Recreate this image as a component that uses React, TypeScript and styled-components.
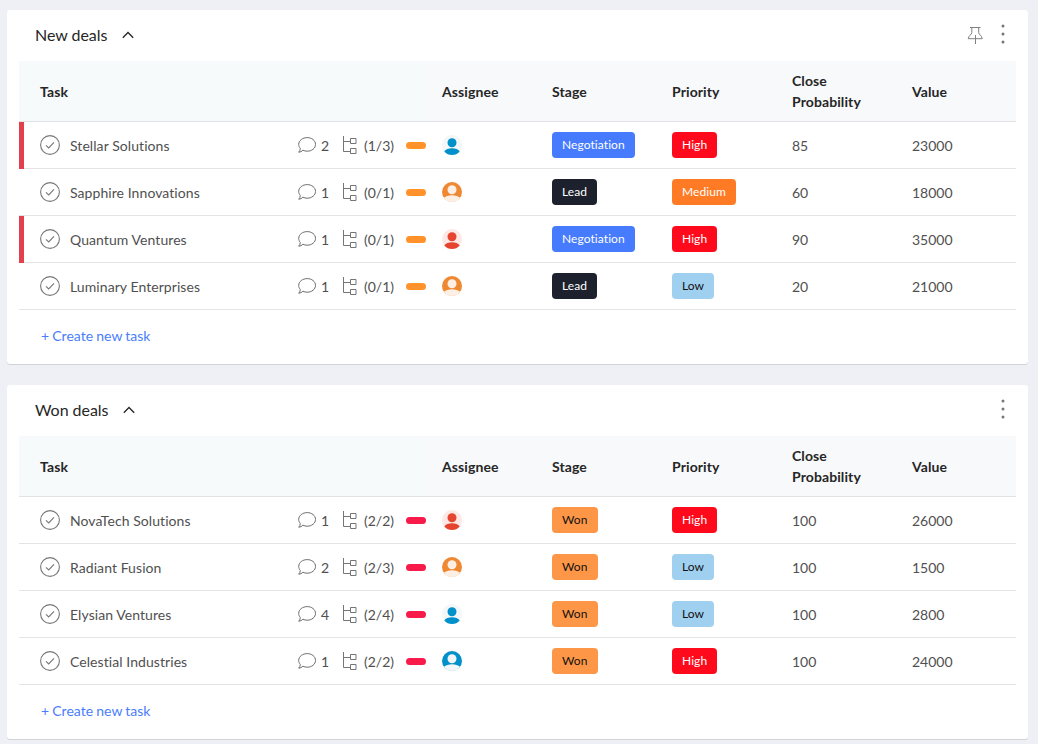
import React from "react";
import styled, { createGlobalStyle } from "styled-components";

const GlobalStyle = createGlobalStyle`
  * { box-sizing: border-box; }
  body {
    margin: 0;
    background: #eff0f5;
    font-family: Lato, "Liberation Sans", sans-serif;
    font-size: 14px;
    font-variant-ligatures: none;
    color: #505050;
  }
`;

const Page = styled.main`
  display: flex;
  flex-direction: column;
  gap: 21px;
  padding: 10px 10px 4px 7px;
  height: 744px;
  overflow: hidden;
`;

const Card = styled.section`
  flex: none;
  height: 354px;
  padding: 0 12px;
  background: #fff;
  border-radius: 3px;
  box-shadow: 0 1px 0 #d2d3d6;
`;

const CardHeader = styled.header`
  display: flex;
  align-items: center;
  height: 51px;
  padding: 0 10px 0 16px;
`;

const Title = styled.h2`
  margin: 0;
  padding-bottom: 2px;
  font-size: 16px;
  font-weight: 400;
  line-height: 20px;
  letter-spacing: -0.04px;
  color: #262626;
`;

const Collapse = styled.span`
  display: flex;
  margin-left: 14.5px;
  padding-bottom: 1px;
`;

const Actions = styled.div`
  display: flex;
  align-items: center;
  gap: 17px;
  margin-left: auto;
  padding-bottom: 3px;
`;

const columns = "408px 105px 120px 120px 120px 124px";

const TableHead = styled.div`
  display: grid;
  grid-template-columns: ${columns};
  height: 61px;
  background: #f8f9fb;
  border-bottom: 1px solid #e1e2e5;
`;

const HeadCell = styled.div<{ $first?: boolean; $narrow?: boolean }>`
  display: flex;
  align-items: center;
  padding-left: ${(p) => (p.$first ? 21 : p.$narrow ? 15 : 20)}px;
  padding-right: 20px;
  background: ${(p) => (p.$first ? "#f6fafb" : "transparent")};
  font-weight: 700;
  line-height: 21px;
  letter-spacing: 0.1px;
  color: #262626;
`;

const Row = styled.div<{ $flagged?: boolean }>`
  position: relative;
  display: grid;
  grid-template-columns: ${columns};
  align-items: center;
  height: 47px;
  border-bottom: 1px solid #e3e4e6;
  &::before {
    content: "";
    display: ${(p) => (p.$flagged ? "block" : "none")};
    position: absolute;
    left: 0;
    top: 0;
    width: 5px;
    height: 47px;
    background: #e2414b;
  }
`;

const TaskCell = styled.div`
  display: flex;
  align-items: center;
  height: 46px;
  padding: 0 1px 0 21px;
`;

const Name = styled.span`
  flex: 1;
  margin-left: 10px;
  letter-spacing: 0.07px;
`;

const CommentCount = styled.span`
  width: 22px;
  padding-left: 5px;
`;

const Subtasks = styled.span`
  display: flex;
  align-items: center;
  margin-left: 5px;
`;

const SubtaskCount = styled.span`
  width: 49px;
  padding-left: 7px;
`;

const Pill = styled.span<{ $color: string }>`
  width: 20px;
  height: 7px;
  margin-top: 1px;
  border-radius: 4px;
  background: ${(p) => p.$color};
`;

const AssigneeCell = styled.div`
  display: flex;
  padding-left: 15px;
`;

const Cell = styled.div`
  display: flex;
  padding-left: 20px;
`;

const Tag = styled.span<{ $bg: string; $fg: string }>`
  height: 26px;
  padding: 0 10px;
  border-radius: 4px;
  font-size: 12px;
  line-height: 26px;
  letter-spacing: 0.08px;
  background: ${(p) => p.$bg};
  color: ${(p) => p.$fg};
`;

const CreateLink = styled.a`
  display: block;
  padding: 17px 0 0 22px;
  line-height: 17px;
  word-spacing: -0.4px;
  color: #4a7dfb;
`;

const CheckIcon = () => (
  <svg width="20" height="20" viewBox="0 0 20 20" fill="none" stroke="#777">
    <circle cx="10" cy="10" r="9.4" strokeWidth="1.1" />
    <path d="M6 10.400l2.700 2.600 5.300-5.600" strokeWidth="1.1" />
  </svg>
);

const CommentIcon = () => (
  <svg width="18" height="18" viewBox="0 0 18 18" fill="none" stroke="#6c6c6c" strokeWidth="1">
    <path d="M9.200 1.600c4.600 0 8.300 2.900 8.300 6.800s-3.700 6.800-8.300 6.800c-1.600 0-3.100-.4-4.300-1-1.100 1.200-2.500 1.900-4.200 2 1-1 1.500-2.200 1.600-3.700C1.300 11.300.7 10 .7 8.400c0-3.900 3.900-6.800 8.500-6.800z" />
  </svg>
);

const TreeIcon = () => (
  <svg width="14" height="18" viewBox="0 0 14 18" fill="none" stroke="#757575" strokeWidth="1">
    <path d="M.5 0v15.500h7M.5 5.500h7M7.500 2.500h5.500v5h-5.500zM7.500 12.500h5.500v5h-5.500z" />
  </svg>
);

const Chevron = () => (
  <svg width="12" height="8" viewBox="0 0 12 8" fill="none" stroke="#262626" strokeWidth="1.3">
    <path d="M.8 6.800L6 1.500l5.200 5.300" />
  </svg>
);

const PinIcon = () => (
  <svg width="16" height="19" viewBox="0 0 16 19" fill="none" stroke="#808080" strokeWidth="1">
    <path d="M3 2.500h10.500M4.800 2.500v5.200c0 1.800-3.200 2.800-3.600 6h14.100c-.4-3.200-3.600-4.200-3.600-6V2.500M8.500 10v9" />
  </svg>
);

const DotsIcon = () => (
  <svg width="6" height="20" viewBox="0 0 6 20" fill="#777">
    <circle cx="3" cy="2" r="1.500" />
    <circle cx="3" cy="10" r="1.500" />
    <circle cx="3" cy="18" r="1.500" />
  </svg>
);

const avatars = {
  blue: { back: "#f5f6f7", front: "#0090ca", outline: false },
  red: { back: "#fde8e6", front: "#e5452f", outline: false },
  orange: { back: "#ee8833", front: "#feefe5", outline: true },
  blueSolid: { back: "#0090ca", front: "#f3f6f8", outline: true },
};

type AvatarKind = keyof typeof avatars;

const Avatar = ({ kind }: { kind: AvatarKind }) => {
  const { back, front, outline } = avatars[kind];
  return (
    <svg width="20" height="20" viewBox="0 0 20 20">
      <circle cx="10" cy="10" r="10" fill={back} />
      <circle cx="10" cy="7.800" r="4.500" fill={front} />
      {outline ? (
        <path d="M1.900 15.800C3.800 14.200 6.600 13.300 10 13.300s6.200.9 8.100 2.500A10 10 0 0 1 10 20a10 10 0 0 1-8.100-4.200z" fill={front} />
      ) : (
        <path d="M2.300 16.400C3.700 14.300 6.500 13.200 10 13.200s6.300 1.100 7.700 3.200A10 10 0 0 1 10 20a10 10 0 0 1-7.700-3.600z" fill={front} />
      )}
    </svg>
  );
};

const tagColors: Record<string, [string, string]> = {
  Negotiation: ["#467bfd", "#fff"],
  Lead: ["#1d212d", "#fff"],
  Won: ["#fd9747", "#111"],
  High: ["#ff0a1d", "#fff"],
  Medium: ["#ff7a24", "#fff"],
  Low: ["#a0d0ef", "#111"],
};

const ColoredTag = ({ label }: { label: string }) => (
  <Tag $bg={tagColors[label][0]} $fg={tagColors[label][1]}>{label}</Tag>
);

interface Deal {
  name: string;
  comments: number;
  subtasks: string;
  avatar: AvatarKind;
  stage: string;
  priority: string;
  probability: number;
  value: number;
  flagged?: boolean;
}

const newDeals: Deal[] = [
  { name: "Stellar Solutions", comments: 2, subtasks: "(1/3)", avatar: "blue", stage: "Negotiation", priority: "High", probability: 85, value: 23000, flagged: true },
  { name: "Sapphire Innovations", comments: 1, subtasks: "(0/1)", avatar: "orange", stage: "Lead", priority: "Medium", probability: 60, value: 18000 },
  { name: "Quantum Ventures", comments: 1, subtasks: "(0/1)", avatar: "red", stage: "Negotiation", priority: "High", probability: 90, value: 35000, flagged: true },
  { name: "Luminary Enterprises", comments: 1, subtasks: "(0/1)", avatar: "orange", stage: "Lead", priority: "Low", probability: 20, value: 21000 },
];

const wonDeals: Deal[] = [
  { name: "NovaTech Solutions", comments: 1, subtasks: "(2/2)", avatar: "red", stage: "Won", priority: "High", probability: 100, value: 26000 },
  { name: "Radiant Fusion", comments: 2, subtasks: "(2/3)", avatar: "orange", stage: "Won", priority: "Low", probability: 100, value: 1500 },
  { name: "Elysian Ventures", comments: 4, subtasks: "(2/4)", avatar: "blue", stage: "Won", priority: "Low", probability: 100, value: 2800 },
  { name: "Celestial Industries", comments: 1, subtasks: "(2/2)", avatar: "blueSolid", stage: "Won", priority: "High", probability: 100, value: 24000 },
];

const DealRow = ({ deal, accent }: { deal: Deal; accent: string }) => (
  <Row $flagged={deal.flagged}>
    <TaskCell>
      <CheckIcon />
      <Name>{deal.name}</Name>
      <CommentIcon />
      <CommentCount>{deal.comments}</CommentCount>
      <Subtasks>
        <TreeIcon />
        <SubtaskCount>{deal.subtasks}</SubtaskCount>
      </Subtasks>
      <Pill $color={accent} />
    </TaskCell>
    <AssigneeCell><Avatar kind={deal.avatar} /></AssigneeCell>
    <Cell><ColoredTag label={deal.stage} /></Cell>
    <Cell><ColoredTag label={deal.priority} /></Cell>
    <Cell>{deal.probability}</Cell>
    <Cell>{deal.value}</Cell>
  </Row>
);

const DealCard = ({ title, deals, accent, pinned }: { title: string; deals: Deal[]; accent: string; pinned?: boolean }) => (
  <Card>
    <CardHeader>
      <Title>{title}</Title>
      <Collapse><Chevron /></Collapse>
      <Actions>
        {pinned && <PinIcon />}
        <DotsIcon />
      </Actions>
    </CardHeader>
    <TableHead>
      <HeadCell $first>Task</HeadCell>
      <HeadCell $narrow>Assignee</HeadCell>
      <HeadCell>Stage</HeadCell>
      <HeadCell>Priority</HeadCell>
      <HeadCell>Close Probability</HeadCell>
      <HeadCell>Value</HeadCell>
    </TableHead>
    {deals.map((deal) => <DealRow key={deal.name} deal={deal} accent={accent} />)}
    <CreateLink>+ Create new task</CreateLink>
  </Card>
);

export default function App() {
  return (
    <>
      <GlobalStyle />
      <Page>
        <DealCard title="New deals" deals={newDeals} accent="#ff922b" pinned />
        <DealCard title="Won deals" deals={wonDeals} accent="#f81a4b" />
      </Page>
    </>
  );
}
